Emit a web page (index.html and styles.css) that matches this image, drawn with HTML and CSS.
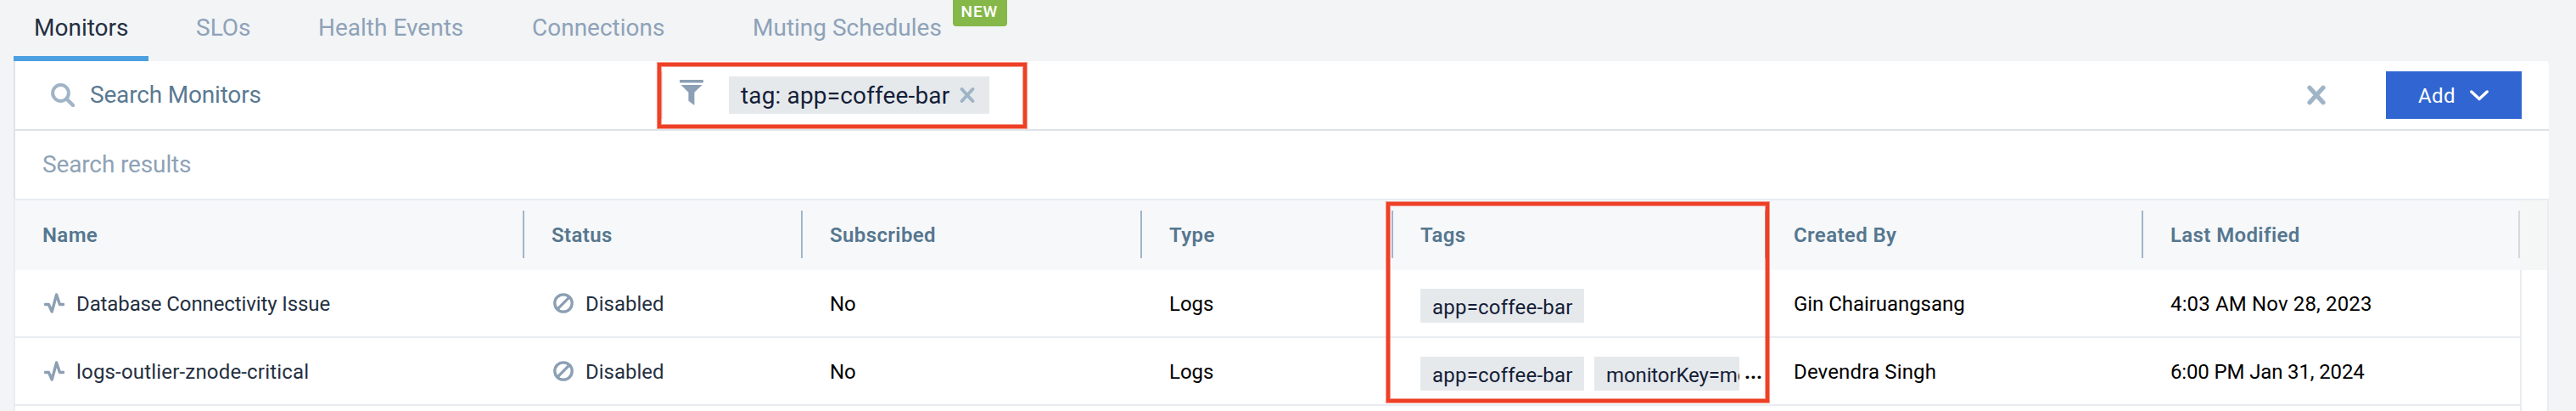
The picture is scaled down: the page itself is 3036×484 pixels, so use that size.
FILE: index.html
```html
<!DOCTYPE html>
<html lang="en">
<head>
<meta charset="utf-8">
<title>Monitors</title>
<link rel="stylesheet" href="styles.css">
</head>
<body>
<svg class="sprite" width="0" height="0" aria-hidden="true">
  <symbol id="pulse" viewBox="0 0 24 24"><path d="M1.5 13.5H5.4L9.2 22L14.6 2L18.4 13.5H22.6" fill="none" stroke="currentColor" stroke-width="3.4" stroke-linecap="round" stroke-linejoin="round"/></symbol>
  <symbol id="disabled" viewBox="0 0 24 24"><circle cx="12" cy="12" r="10.2" fill="none" stroke="currentColor" stroke-width="3.3"/><path d="M5.2 18.8L18.8 5.2" stroke="currentColor" stroke-width="3.3"/></symbol>
</svg>
<nav class="tabs">
  <a class="tab tab-active">Monitors</a>
  <a class="tab">SLOs</a>
  <a class="tab">Health Events</a>
  <a class="tab">Connections</a>
  <a class="tab">Muting Schedules<span class="badge">NEW</span></a>
</nav>
<main class="panel">
  <div class="toolbar">
    <div class="search">
      <svg class="icon-search" width="28" height="28" viewBox="0 0 28 28"><circle cx="11.5" cy="11.5" r="9.4" fill="none" stroke="currentColor" stroke-width="4"/><path d="M18.8 18.8L26 26" stroke="currentColor" stroke-width="4.4" stroke-linecap="round"/></svg>
      <span class="search-text">Search Monitors</span>
    </div>
    <div class="filter">
      <svg class="icon-funnel" width="28" height="30" viewBox="0 0 28 30"><rect width="28" height="3.4" rx="1" fill="currentColor"/><path d="M1.6 6H26.6L17.4 14.8V30L10.4 24.8V14.8Z" fill="currentColor"/></svg>
      <span class="filter-chip">tag: app=coffee-bar<svg class="icon-remove" width="18" height="20" viewBox="0 0 18 20"><path d="M2.6 3L15.4 17M15.4 3L2.6 17" stroke="currentColor" stroke-width="4" stroke-linecap="round"/></svg></span>
      <div class="callout callout-filter"></div>
    </div>
    <svg class="icon-clear" width="22" height="24" viewBox="0 0 22 24"><path d="M3 3.2L19 20.8M19 3.2L3 20.8" stroke="currentColor" stroke-width="5.2" stroke-linecap="round"/></svg>
    <button class="add"><span>Add</span><svg width="22" height="13" viewBox="0 0 22 13"><path d="M1.8 2L11 10.6L20.2 2" fill="none" stroke="currentColor" stroke-width="3.4" stroke-linecap="round" stroke-linejoin="round"/></svg></button>
  </div>
  <div class="results">Search results</div>
  <section class="table">
    <div class="row head">
      <div>Name</div><div>Status</div><div>Subscribed</div><div>Type</div><div>Tags</div><div>Created By</div><div class="last">Last Modified</div>
      <span class="gutter"></span>
    </div>
    <div class="row">
      <div class="with-icon name-a"><svg class="icon-row" width="24" height="24"><use href="#pulse"/></svg>Database Connectivity Issue</div>
      <div class="with-icon"><svg class="icon-row" width="24" height="24"><use href="#disabled"/></svg>Disabled</div>
      <div>No</div>
      <div>Logs</div>
      <div class="tags"><span class="tag-list"><span class="tag">app=coffee-bar</span></span></div>
      <div class="name-d">Gin Chairuangsang</div>
      <div class="date-a">4:03 AM Nov 28, 2023</div>
    </div>
    <div class="row">
      <div class="with-icon name-b"><svg class="icon-row" width="24" height="24"><use href="#pulse"/></svg>logs-outlier-znode-critical</div>
      <div class="with-icon"><svg class="icon-row" width="24" height="24"><use href="#disabled"/></svg>Disabled</div>
      <div>No</div>
      <div>Logs</div>
      <div class="tags"><span class="tag-list"><span class="tag">app=coffee-bar</span><span class="tag tag-clipped">monitorKey=mo</span></span><b class="more">...</b></div>
      <div class="name-c">Devendra Singh</div>
      <div class="date-b">6:00 PM Jan 31, 2024</div>
    </div>
    <div class="row row-cut"></div>
    <div class="callout callout-tags"></div>
  </section>
</main>
</body>
</html>
```
FILE: styles.css
```css
* { box-sizing: border-box; }
body {
  margin: 0;
  height: 484px;
  overflow: hidden;
  background: #f2f4f6;
  font-family: Roboto, "Liberation Sans", sans-serif;
  font-size: 24px;
  color: #000;
}
svg { display: block; flex: none; }
.sprite { position: absolute; }

.tabs {
  display: grid;
  grid-template-columns: 191px 144px 252px 260px 400px;
  height: 72px;
  padding-left: 16px;
  font-size: 28px;
  line-height: 65px;
  color: #8ea2b8;
  white-space: nowrap;
}
.tab { position: relative; justify-self: start; padding: 0 24px; }
.tab-active { width: 159px; height: 72px; color: #242f3f; border-bottom: 6px solid #4d9fe0; }
.badge {
  position: absolute;
  left: 260px;
  top: 0;
  width: 64px;
  height: 31px;
  border-radius: 0 0 4px 4px;
  background: #86b849;
  color: #fff;
  font-size: 19px;
  font-weight: 500;
  line-height: 27px;
  letter-spacing: 0.9px;
  padding-left: 9.5px;
}

.panel { margin: 0 32px 0 16px; }
.toolbar {
  display: flex;
  align-items: center;
  height: 82px;
  padding-right: 32px;
  background: #fff;
  border-left: 2px solid #dfe3e8;
  border-bottom: 2px solid #dfe3e8;
  border-radius: 0 4px 0 0;
  color: #a0b4c7;
  font-size: 28px;
  white-space: nowrap;
}
.search { display: flex; align-items: center; width: 761px; height: 80px; padding-left: 42px; gap: 18px; }
.search-text { margin-bottom: 1px; color: #5a7992; line-height: 79px; letter-spacing: -0.18px; }
.filter {
  position: relative;
  display: flex;
  align-items: center;
  height: 56px;
  padding-left: 20px;
  gap: 30px;
  border-left: 2px solid #dfe3e8;
}
.icon-funnel { color: #8c9fb4; margin-bottom: 6px; }
.filter-chip {
  display: flex;
  align-items: center;
  gap: 12px;
  width: 307px;
  height: 44px;
  padding-left: 14px;
  background: #e6e9ec;
  color: #151e38;
  line-height: 43px;
  letter-spacing: 0.15px;
}
.icon-remove { color: #a0b4c7; }
.icon-clear { margin-left: auto; margin-right: 71px; }
.add {
  display: flex;
  align-items: center;
  gap: 17px;
  width: 160px;
  height: 56px;
  padding: 0 0 0 38px;
  border: 0;
  background: #3166d2;
  color: #fff;
  font: 24px/56px Roboto, sans-serif;
  letter-spacing: 0.4px;
}
.add span { padding-top: 2px; }
.results {
  height: 80px;
  padding-left: 32px;
  background: #fff;
  border-left: 2px solid #dfe3e8;
  color: #8ea2b6;
  font-size: 28px;
  line-height: 79px;
  letter-spacing: -0.14px;
}

.table {
  position: relative;
  border: 2px solid #e9edf1;
  border-bottom: 0;
  background: #fff;
}
.row {
  display: grid;
  grid-template-columns: 600px 328px 400px 296px 440px 444px 444px;
  width: 2954px;
  height: 80px;
  border-right: 2px solid #e9edf1;
  border-bottom: 2px solid #e9edf1;
  line-height: 80px;
  white-space: nowrap;
}
.row-cut { height: 6px; border-bottom: 0; }
.row > div { padding-left: 32px; height: 78px; }
.head {
  grid-template-columns: 600px 328px 400px 296px 440px 444px 444px 32px;
  width: 2984px;
  height: 82px;
  border: 0;
  background: #f6f8fa;
  color: #56778f;
  font-weight: 600;
  letter-spacing: 0.38px;
}
.head > div { height: 56px; margin: 12px 0 14px; border-right: 2px solid #9fb5c9; line-height: 58px; }
.head > .last { border-color: #d7dadd; }
.gutter { background: #f5f7f6; }
.row > .with-icon { display: flex; gap: 14px; padding-left: 34px; color: #242f3f; }
.icon-row { margin-top: 27px; color: #8c9fb4; }
.name-a { letter-spacing: -0.11px; }
.name-b { letter-spacing: 0.18px; }
.name-c { letter-spacing: 0.15px; }
.name-d { letter-spacing: -0.05px; }
.date-a { letter-spacing: 0.15px; }
.date-b { letter-spacing: -0.14px; }
.tags { display: flex; }
.tag-list { display: flex; gap: 12px; width: 376px; height: 40px; margin-top: 22px; overflow: hidden; }
.tag {
  flex: none;
  width: 193px;
  height: 40px;
  padding: 2px 0 0 14px;
  background: #e6e9ec;
  color: #151e38;
  line-height: 40px;
  letter-spacing: 0.22px;
}
.tag-clipped { letter-spacing: -0.12px; }
.more { padding-left: 6px; }

.callout {
  position: absolute;
  border: 4px solid #ee4026;
  box-shadow: 0 0 0 1px rgba(238, 64, 38, 0.55), inset 0 0 0 1px rgba(238, 64, 38, 0.5);
}
.callout-filter { left: -6px; top: -10px; width: 435px; height: 77px; }
.callout-tags { left: 1616px; top: 2px; width: 451px; height: 236px; }
```
